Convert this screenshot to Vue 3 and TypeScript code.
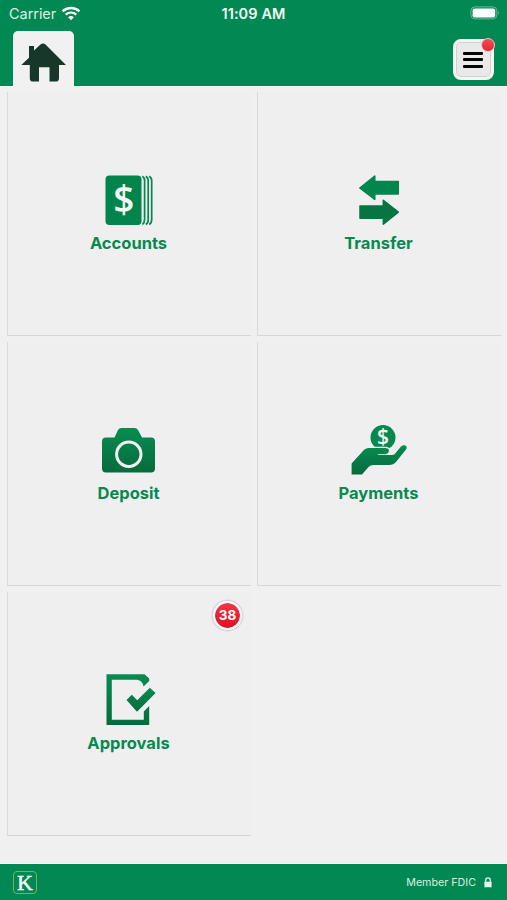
<script setup lang="ts">
interface Tile {
  id: string
  label: string
  badge?: number
}

const tiles: Tile[] = [
  { id: 'accounts', label: 'Accounts' },
  { id: 'transfer', label: 'Transfer' },
  { id: 'deposit', label: 'Deposit' },
  { id: 'payments', label: 'Payments' },
  { id: 'approvals', label: 'Approvals', badge: 38 },
]
</script>

<template>
  <div class="screen">
    <header class="header">
      <div class="status">
        <div class="carrier">
          <span>Carrier</span>
          <svg class="wifi" width="20" height="15" viewBox="0 0 20 15">
            <path d="M1.6 5.4C6.3.9 13.7.9 18.4 5.4" fill="none" stroke="#fff" stroke-width="2.5" />
            <path d="M4.7 8.7C7.8 5.9 12.2 5.9 15.3 8.7" fill="none" stroke="#fff" stroke-width="2.3" />
            <path d="M7.1 11.2Q10 8.8 12.9 11.2L10 14.2Z" fill="#fff" />
          </svg>
        </div>
        <span class="time">11:09 AM</span>
        <svg class="battery" width="30" height="14" viewBox="0 0 30 14">
          <rect x=".9" y=".9" width="26" height="12" rx="4" fill="none" stroke="#6fb893" stroke-width="1" />
          <rect x="2.6" y="2.4" width="22.6" height="9" rx="2" fill="#fff" />
          <path d="M28 4.8q1.7 2.1 0 4.2z" fill="#6fb893" />
        </svg>
      </div>
      <div class="nav">
        <div class="home-tab">
          <svg width="46" height="42" viewBox="0 0 46 42">
            <path
              d="M8 5h5v4.4l6.5-6q2.500-1.900 5 0L45 24h-7v13.200q0 3.400-3.400 3.400H28.500V26.200H18v14.400h-5.800q-3.400 0-3.400-3.400V24H.3l7.700-7.300z"
              fill="#16372a"
            />
          </svg>
        </div>
        <button class="menu" type="button" aria-label="Menu">
          <span class="bar"></span>
          <span class="bar"></span>
          <span class="bar"></span>
          <span class="dot"></span>
        </button>
      </div>
    </header>

    <main class="grid">
      <section v-for="tile in tiles" :key="tile.id" class="tile">
        <svg class="icon" width="60" height="60" viewBox="0 0 60 60">
          <defs>
            <linearGradient :id="`g-${tile.id}`" x1="0" y1="0" x2="0" y2="1">
              <stop offset="0" stop-color="#078c52" />
              <stop offset="1" stop-color="#066b3d" />
            </linearGradient>
          </defs>
          <template v-if="tile.id === 'accounts'">
            <rect x="6.5" y="5.5" width="36" height="49.5" rx="4" fill="#03844c" />
            <path
              d="M43.400 6.200Q45.600 7.500 45.600 10.500V49.500Q45.600 53 43.400 54.500M46.800 6.200Q49.200 7.500 49.200 10.500V49.500Q49.200 53 46.800 54.500M50.200 6.200Q52.700 7.500 52.700 10.500V49.500Q52.700 53 50.200 54.500"
              fill="none"
              stroke="#068550"
              stroke-width="1.7"
            />
            <text x="24.8" y="43.2" class="dollar large">$</text>
          </template>
          <g v-else-if="tile.id === 'transfer'" stroke-linejoin="round" stroke-width="1.5">
            <path d="M10.800 18L25.800 6V11.500H49.300V24H25.800V29.500Z" fill="#03864d" stroke="#03864d" />
            <path d="M49.300 42.200L34.300 30.300V36H11V48.300H34.300V54.200Z" fill="#067541" stroke="#067541" />
          </g>
          <template v-else-if="tile.id === 'deposit'">
            <path
              d="M7 17.500H15.500L19 10Q20 8 22.500 8H35.500Q38 8 39 10L43 17.500H52Q56 17.500 56 21.500V48.500Q56 52.500 52 52.500H7Q3 52.500 3 48.500V21.500Q3 17.500 7 17.500Z"
              fill="url(#g-deposit)"
            />
            <circle cx="29.8" cy="34.3" r="12.2" fill="none" stroke="#f1f5ef" stroke-width="3" />
          </template>
          <template v-else-if="tile.id === 'payments'">
            <circle cx="34" cy="17.5" r="12.5" fill="#078850" />
            <text x="34" y="24.3" class="dollar small">$</text>
            <path
              d="M2.600 54.500V43.500L13.500 31.500Q16 28 20 28H36Q40 28 40 30.800T37 34H29.500V35H43Q45.500 35 47 32.500L52 26.500Q54 24.500 56.500 25.500Q58.500 27 57 29.500L47 42Q44.500 45 40 45H24.500Q21.500 45 19.500 47L13 54.500Z"
              fill="url(#g-payments)"
              stroke="#efefef"
              stroke-width="2.4"
              stroke-linejoin="round"
              paint-order="stroke"
            />
            <path d="M28.500 34.500H37Q40 34 40 31" fill="none" stroke="#b5d5c0" stroke-width=".8" />
          </template>
          <template v-else>
            <path
              d="M7.500 4.300H45.500L50.200 8.500V11L44.500 16.500Q43.500 10.500 38 9.800H12.800V49.700H44.800V41.500L50.200 36V55H7.500Z"
              fill="url(#g-approvals)"
            />
            <path d="M27.500 30L32.800 24.800L38.200 30.200L50.800 17.800L56.600 23L38 41.700Z" fill="url(#g-approvals)" />
          </template>
        </svg>
        <span class="label">{{ tile.label }}</span>
        <span v-if="tile.badge" class="badge">{{ tile.badge }}</span>
      </section>
    </main>

    <footer class="footer">
      <span class="logo">K</span>
      <div class="fdic">
        <span>Member FDIC</span>
        <svg width="8" height="11" viewBox="0 0 8 11">
          <path d="M1.700 5V3.200a2.300 2.300 0 0 1 4.600 0V5" fill="none" stroke="#e8f5ec" stroke-width="1.3" />
          <rect x=".4" y="4.7" width="7.2" height="5.6" rx=".6" fill="#e8f5ec" />
        </svg>
      </div>
    </footer>
  </div>
</template>

<style>
body {
  margin: 0;
  background: #efefef;
}
</style>

<style scoped>
.screen {
  width: 507px;
  height: 900px;
  display: flex;
  flex-direction: column;
  overflow: hidden;
  background: #f0f0f0;
  font-family: Inter, 'Liberation Sans', sans-serif;
}
.header {
  height: 86px;
  flex: none;
  background: #028852;
  border-bottom: 1px solid #f8fcf8;
  box-sizing: content-box;
}
.status {
  height: 31px;
  display: grid;
  grid-template-columns: 1fr auto 1fr;
  align-items: start;
  color: #f3fbf5;
}
.carrier {
  display: flex;
  gap: 5px;
  padding: 5px 0 0 9px;
  font-size: 14.5px;
  line-height: 18px;
  letter-spacing: -0.05px;
  color: #d8f3e3;
}
.wifi {
  margin-top: 1px;
}
.time {
  padding-top: 5px;
  font-size: 14.5px;
  line-height: 18px;
  font-weight: 600;
  letter-spacing: 0.1px;
}
.battery {
  justify-self: end;
  margin: 6px 7px 0 0;
}
.nav {
  height: 56px;
  display: flex;
  justify-content: space-between;
  align-items: flex-start;
  padding: 0 13px;
}
.home-tab {
  width: 61px;
  height: 56px;
  box-sizing: border-box;
  padding: 10px 0 0 8px;
  border-radius: 5px 5px 0 0;
  background: #f0f1f0;
}
.menu {
  position: relative;
  width: 41px;
  height: 41px;
  margin-top: 8px;
  padding: 0 1px 0 0;
  display: flex;
  flex-direction: column;
  align-items: center;
  justify-content: center;
  gap: 3.5px;
  border: 3px solid #f4f6f4;
  border-radius: 8px;
  background: #e9e9e9;
  box-shadow: inset 0 0 0 1px #d0d2d0;
}
.bar {
  width: 20px;
  height: 3px;
  border-radius: 1px;
  background: #050505;
}
.dot {
  position: absolute;
  top: -4px;
  right: -4px;
  width: 12px;
  height: 12px;
  border: 1px solid #f4c2c5;
  border-radius: 50%;
  background: linear-gradient(#f44c58, #e32636);
}
.grid {
  flex: 1;
  display: grid;
  grid-template-columns: 244px 244px;
  grid-auto-rows: 244px;
  gap: 6px;
  padding: 5px 0 0 7px;
}
.tile {
  position: relative;
  box-sizing: border-box;
  display: flex;
  flex-direction: column;
  align-items: center;
  padding: 78px 2px 0 0;
  border-left: 1px solid #dadada;
  border-bottom: 1px solid #d6d6d6;
  background: #efefef;
}
.icon {
  display: block;
}
.label {
  margin-top: 3px;
  font-size: 16.5px;
  line-height: 20px;
  font-weight: 700;
  color: #078950;
}
.dollar {
  fill: #f2f7f1;
  font-family: 'Open Sans', 'Noto Sans', sans-serif;
  font-weight: 600;
  text-anchor: middle;
}
.large {
  font-size: 37px;
}
.small {
  font-size: 21px;
}
.badge {
  position: absolute;
  top: 9px;
  right: 9px;
  width: 25px;
  height: 25px;
  border: 2px solid #f8f8f8;
  border-radius: 50%;
  box-shadow: 0 0 0 1.5px #d8d8d8;
  background: linear-gradient(#ee3948, #e40c20);
  background-clip: padding-box;
  color: #fff;
  font-size: 13.5px;
  line-height: 25px;
  font-weight: 700;
  text-align: center;
}
.footer {
  height: 36px;
  flex: none;
  box-sizing: content-box;
  border-top: 1px solid #f7fcf8;
  background: #028852;
  display: flex;
  align-items: center;
  justify-content: space-between;
  padding: 0 15px 0 13px;
}
.logo {
  width: 22px;
  height: 21px;
  border: 1px solid #82ad58;
  border-radius: 4px;
  color: #fff;
  font: 22px / 21px 'Liberation Serif', serif;
  -webkit-text-stroke: 0.4px #fff;
  text-align: center;
}
.fdic {
  display: flex;
  align-items: center;
  gap: 8px;
  font-size: 10.7px;
  color: #d6f1e0;
}
</style>
